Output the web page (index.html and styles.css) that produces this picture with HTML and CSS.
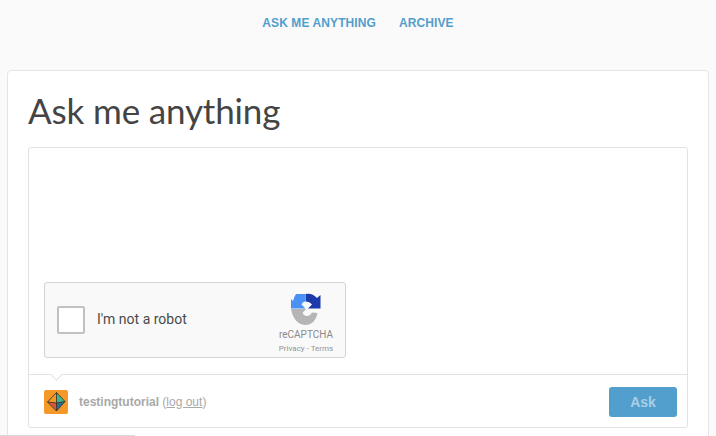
FILE: index.html
```html
<!DOCTYPE html>
<html lang="en">
<head>
<meta charset="utf-8">
<title>Ask me anything</title>
<link rel="stylesheet" href="styles.css">
</head>
<body>
<nav class="nav">
  <a class="nav-link" href="#">Ask me anything</a>
  <a class="nav-link" href="#">Archive</a>
</nav>
<main class="card">
  <h1 class="title">Ask me anything</h1>
  <section class="box">
    <div class="box-body">
      <div class="captcha">
        <span class="check"></span>
        <span class="robot">I'm not a robot</span>
        <div class="brand">
          <svg class="brand-logo" width="32" height="32" viewBox="0 0 32 32">
            <path d="M1 16 H16 L12.5 20 Q14 23 17 23 Q20 23 22 19.5 L27.5 20 Q25 32 15 32 Q4 31 1 16Z" fill="#b5b5b5"/>
            <path d="M6 1 L15 1 L15 8.5 Q12.5 9 11.5 11.5 L15.5 15.5 L1 15.5 L1 6 L3 8 Q4 4 6 1Z" fill="#4a90f5"/>
            <path d="M15.5 1 Q22 -0.5 27 5 L30.5 2 L30.5 15.5 L18 15.5 L22 11.5 Q19.5 8.5 15.5 8.5Z" fill="#1c3aa9"/>
          </svg>
          <span class="brand-name">reCAPTCHA</span>
          <span class="brand-links">Privacy - Terms</span>
        </div>
      </div>
    </div>
    <footer class="box-foot">
      <span class="notch"></span>
      <svg class="avatar" width="24" height="24" viewBox="0 0 24 24">
        <rect width="24" height="24" rx="2" fill="#f4982a"/>
        <path d="M12.5 2.5 L21 11.5 L12.5 13Z" fill="#3fb68c"/>
        <path d="M12.5 13 L21 11.5 L12.5 21Z" fill="#2c6f8c"/>
        <path d="M3.5 12 L12.5 13 L12.5 21Z" fill="#d9573a"/>
        <path d="M12.5 2.5 L21 11.5 L12.5 21 L3.5 12Z M12.5 2.5 L12.5 21 M3.5 12 L12.5 13 L21 11.5" fill="none" stroke="#2d2d2d" stroke-width="0.8"/>
      </svg>
      <span class="user"><b class="user-name">testingtutorial</b> (<a class="logout" href="#">log out</a>)</span>
      <button class="ask" type="button">Ask</button>
    </footer>
  </section>
</main>
<div class="edge"></div>
</body>
</html>
```
FILE: styles.css
```css
html, body {
  margin: 0;
  height: 436px;
  overflow: hidden;
  background: #fafafa;
}
.nav {
  height: 70px;
  box-sizing: border-box;
  padding-top: 16px;
  display: flex;
  justify-content: center;
  gap: 23px;
  font: bold 12px/15px "Liberation Sans", Arial, sans-serif;
}
.nav-link {
  color: #529ecc;
  text-decoration: none;
  text-transform: uppercase;
  letter-spacing: 0.1px;
}
.card {
  margin: 0 7px;
  height: 380px;
  box-sizing: border-box;
  background: #fff;
  border: 1px solid #e5e5e5;
  border-radius: 4px;
  padding: 0 20px;
}
.title {
  margin: 0;
  height: 76px;
  padding-top: 17px;
  box-sizing: border-box;
  font: 400 35px/45px Lato, sans-serif;
  letter-spacing: -0.15px;
  color: #444;
}
.box {
  height: 281px;
  box-sizing: border-box;
  border: 1px solid #e2e2e2;
  border-radius: 3px;
  display: flex;
  flex-direction: column;
}
.box-body {
  height: 226px;
  box-sizing: border-box;
  padding: 134px 0 0 15px;
}
.captcha {
  width: 302px;
  height: 76px;
  box-sizing: border-box;
  background: #f9f9f9;
  border: 1px solid #d3d3d3;
  border-radius: 3px;
  display: flex;
  align-items: center;
  padding-left: 12px;
}
.check {
  width: 28px;
  height: 28px;
  box-sizing: border-box;
  background: #fff;
  border: 2px solid #c1c1c1;
  border-radius: 2px;
}
.robot {
  margin: 0 0 2px 12px;
  font: 14px/17px Roboto, sans-serif;
  color: #4a4a4a;
  flex: 1;
}
.brand {
  width: 70px;
  margin-right: 4px;
  display: flex;
  flex-direction: column;
  align-items: center;
  align-self: flex-start;
  padding-top: 10px;
}
.brand-logo {
  display: block;
}
.brand-name {
  font: 10px/14px Roboto, sans-serif;
  color: #8a8a8a;
  margin-top: 3px;
}
.brand-links {
  font: 8px/12px Roboto, sans-serif;
  color: #949494;
  margin-top: 1px;
}
.box-foot {
  position: relative;
  flex: 1;
  border-top: 1px solid #e2e2e2;
  display: flex;
  align-items: center;
  padding: 2px 10px 0 15px;
}
.notch {
  position: absolute;
  left: 23px;
  top: -5px;
  width: 8px;
  height: 8px;
  background: #fff;
  border-right: 1px solid #e2e2e2;
  border-bottom: 1px solid #e2e2e2;
  transform: rotate(45deg);
}
.avatar {
  display: block;
  flex: none;
}
.user {
  margin-left: 11px;
  font: 12px/15px "Liberation Sans", Arial, sans-serif;
  color: #a8a8a8;
  flex: 1;
}
.user-name {
  font-weight: bold;
}
.logout {
  color: #a8a8a8;
}
.ask {
  width: 68px;
  height: 30px;
  border: 0;
  border-radius: 3px;
  background: #529ecc;
  color: #a9cfe7;
  font: bold 14px/30px "Liberation Sans", Arial, sans-serif;
  padding: 0;
}
.edge {
  position: fixed;
  left: 0;
  top: 435px;
  width: 135px;
  height: 1px;
  background: #d8d8d8;
}
```
